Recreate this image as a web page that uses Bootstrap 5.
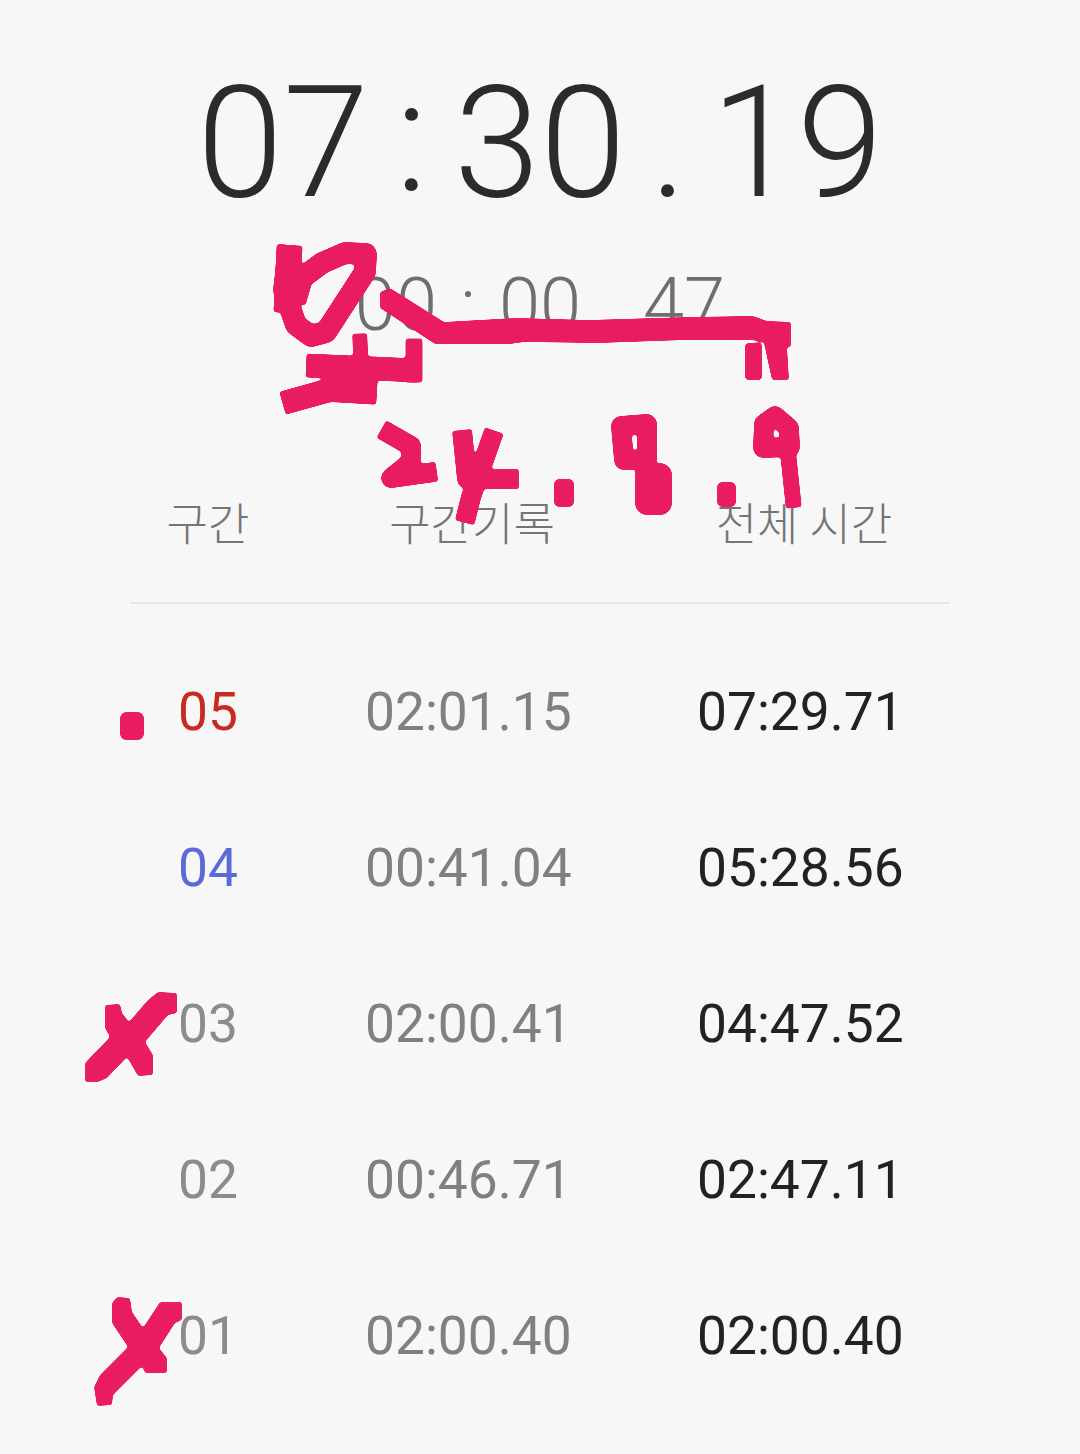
<!DOCTYPE html>
<html lang="ko">
<head>
    <meta charset="UTF-8">
    <meta name="viewport" content="width=device-width, initial-scale=1.0">
    <title>스톱워치</title>
    <link href="https://cdn.jsdelivr.net/npm/bootstrap@5.3.0/dist/css/bootstrap.min.css" rel="stylesheet">
    <style>
        html, body { height: 100%; }
        body {
            background: #f7f7f7;
            font-family: Roboto, "Noto Sans CJK KR", sans-serif;
            overflow: hidden;
        }
        .watch { height: 1454px; padding-top: 51px; }
        .main-time { font-size: 155px; line-height: 184px; font-weight: 300; color: #2b2b2b; }
        .main-time .sep { width: 85px; }
        .main-time .colon { margin-top: -6px; }
        .sub-time { margin-top: 27px; font-size: 74px; line-height: 86px; font-weight: 300; color: #6e6e6e; }
        .sub-time .sep { width: 62px; }
        .lap-head {
            margin: 150px 130px 0;
            padding-bottom: 48px;
            display: grid;
            grid-template-columns: 156px 372px 292px;
            font-size: 45px;
            line-height: 56px;
            font-weight: 300;
            color: #757575;
            border-bottom: 2px solid #e6e6e6;
        }
        .lap-list { margin: 31px 130px 0; }
        .lap-row {
            display: grid;
            grid-template-columns: 187px 332px 1fr;
            padding-left: 48px;
            height: 156px;
            align-items: center;
            font-size: 53.3px;
            color: #222;
        }
        .lap-no { color: #8c8c8c; }
        .lap-split { color: #808080; }
        .lap-worst { color: #c9291f; }
        .lap-best { color: #5b69d9; }
        .ink { position: absolute; top: 0; left: 0; pointer-events: none; }
        .ink path { fill: none; stroke: #e91e63; stroke-linecap: square; stroke-linejoin: round; }
        .ink path.blot { fill: #e91e63; stroke: none; }
        .ink rect { fill: #e91e63; }
    </style>
</head>
<body>
    <div class="watch position-relative">
        <div class="main-time d-flex justify-content-center text-center">
            <span>07</span><span class="sep colon">:</span><span>30</span><span class="sep">.</span><span>19</span>
        </div>
        <div class="sub-time d-flex justify-content-center text-center">
            <span>00</span><span class="sep">:</span><span>00</span><span class="sep">.</span><span>47</span>
        </div>

        <div class="lap-head text-center">
            <div>구간</div>
            <div>구간기록</div>
            <div>전체 시간</div>
        </div>

        <div class="lap-list">
            <div class="lap-row"><span class="lap-worst">05</span><span class="lap-split">02:01.15</span><span>07:29.71</span></div>
            <div class="lap-row"><span class="lap-best">04</span><span class="lap-split">00:41.04</span><span>05:28.56</span></div>
            <div class="lap-row"><span class="lap-no">03</span><span class="lap-split">02:00.41</span><span>04:47.52</span></div>
            <div class="lap-row"><span class="lap-no">02</span><span class="lap-split">00:46.71</span><span>02:47.11</span></div>
            <div class="lap-row"><span class="lap-no">01</span><span class="lap-split">02:00.40</span><span>02:00.40</span></div>
        </div>

        <!-- pen marks drawn over the screenshot -->
        <svg class="ink" width="1080" height="1454" viewBox="0 0 1080 1454">
            <defs>
                <filter id="pen" filterUnits="userSpaceOnUse" x="0" y="0" width="1080" height="1454">
                    <feGaussianBlur stdDeviation="1.5"/>
                    <feComponentTransfer>
                        <feFuncA type="linear" slope="8" intercept="-3.5"/>
                    </feComponentTransfer>
                </filter>
            </defs>
            <g filter="url(#pen)">
                <path stroke-width="22" d="M288 256 L284 290 L296 325 L311 336 L326 332 L365 272 L366 254 L345 253 L322 263 L302 278 L298 292"/>
                <path stroke-width="26" d="M289 258 L287 300"/>
                <path stroke-width="24" d="M318 366 L405 370"/>
                <path stroke-width="17" d="M414 347 L414 374"/>
                <path stroke-width="15" d="M360 341 L362 392"/>
                <path stroke-width="24" d="M294 400 L330 390 L365 392"/>

                <!-- bracket line and its two ticks -->
                <path class="blot" d="M380 292 L390 288 L444 322 L517 318 L589 320 L689 317 L753 316 L767 321 L791 322 L791 347 L785 347 L753 340 L685 340 L599 343 L524 342 L510 344 L435 344 L380 308 Z"/>
                <rect x="745" y="343" width="17" height="37" rx="3"/>
                <path class="blot" d="M764 343 L787 347 L789 380 L772 380 Z"/>

                <path stroke-width="20" d="M390 434 L411 446 L411 462 L391 478 L427 473"/>
                <path stroke-width="20" d="M463 440 L467 479 L509 479"/>
                <path stroke-width="20" d="M491 440 L471 497 L467 513"/>
                <rect x="554" y="479" width="20" height="28" rx="5"/>
                <path stroke-width="20" d="M621 426 L647 424 L647 460 L624 460 Z"/>
                <rect x="635" y="463" width="37" height="52" rx="12"/>
                <rect x="717" y="482" width="19" height="25" rx="5"/>
                <path stroke-width="20" d="M764 424 L775 416 L789 428 L790 447 L763 448 Z"/>
                <path stroke-width="16" d="M789 462 L793 500"/>
                <rect x="120" y="712" width="24" height="28" rx="6"/>

                <!-- crosses on laps 03 and 01 -->
                <path class="blot" d="M105 1005 L120 1004 L122 1013 L129 1022 L148 1000 L158 992 L177 993 L177 1013 L168 1015 L145 1042 L153 1055 L153 1075 L138 1076 L127 1057 L107 1078 L98 1082 L85 1082 L85 1063 L110 1037 L105 1028 Z"/>
                <path class="blot" d="M112 1303 L117 1297 L130 1298 L132 1312 L143 1328 L160 1302 L182 1302 L182 1320 L175 1323 L159 1348 L167 1358 L167 1373 L145 1373 L142 1366 L113 1395 L112 1405 L97 1406 L94 1387 L100 1375 L128 1347 L112 1323 Z"/>
            </g>
        </svg>
    </div>

    <script src="https://cdn.jsdelivr.net/npm/bootstrap@5.3.0/dist/js/bootstrap.bundle.min.js"></script>
</body>
</html>
